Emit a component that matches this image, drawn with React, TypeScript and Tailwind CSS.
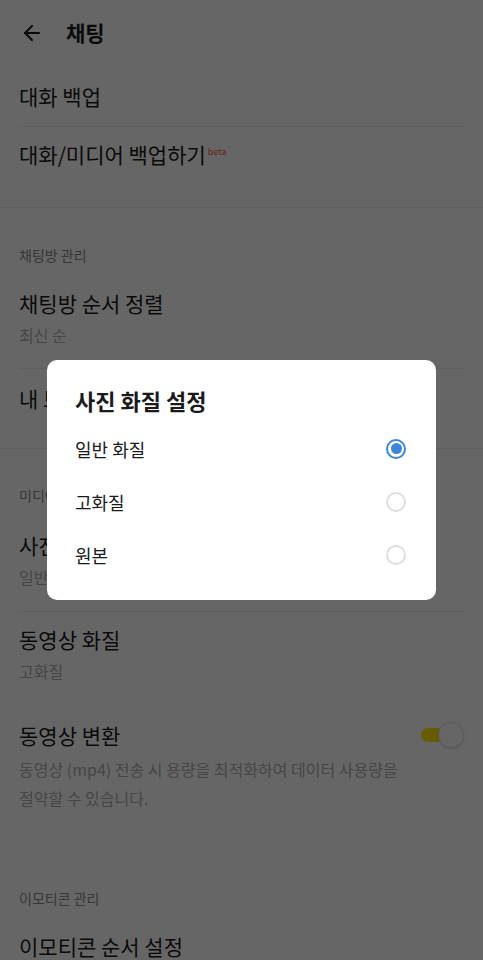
import { ArrowLeft } from 'lucide-react';

const FONT = "font-['Noto_Sans_CJK_KR','Noto_Sans',sans-serif]";

function SectionLabel({ text, top }: { text: string; top: string }) {
  return <div className={`px-[19px] ${top} text-[14px] leading-[20px] text-[#8a8a8a]`}>{text}</div>;
}

function Title({ children }: { children: React.ReactNode }) {
  return <div className="text-[21px] leading-[28px] text-[#1a1a1a]">{children}</div>;
}

function Sub({ text }: { text: string }) {
  return <div className="mt-[7px] text-[16px] leading-[22px] text-[#b0b0b0]">{text}</div>;
}

function Radio({ checked }: { checked?: boolean }) {
  return checked ? (
    <div className="w-[20px] h-[20px] rounded-full border-2 border-[#3a86db] flex items-center justify-center">
      <div className="w-[11px] h-[11px] rounded-full bg-[#3a86db]" />
    </div>
  ) : (
    <div className="w-[20px] h-[20px] rounded-full border-2 border-[#dedede]" />
  );
}

export default function App() {
  const options = [
    { label: '일반 화질', checked: true },
    { label: '고화질' },
    { label: '원본' },
  ];

  return (
    <div className={`relative h-[960px] w-full overflow-hidden bg-white ${FONT}`}>
      {/* Header */}
      <div className="h-[66px] flex items-center px-[20px]">
        <ArrowLeft className="w-[24px] h-[24px] text-[#1a1a1a]" strokeWidth={2} />
        <span className="ml-[22px] text-[21px] font-bold text-[#1a1a1a]">채팅</span>
      </div>

      {/* Backup */}
      <div className="mx-[19px] h-[61px] flex items-center border-b border-[#ececec]">
        <Title>대화 백업</Title>
      </div>
      <div className="px-[19px] pt-[13px] pb-[39px] border-b border-[#ececec]">
        <Title>
          대화/미디어 백업하기
          <span className="ml-[2px] text-[9px] leading-none text-[#ff5a3c] relative top-[-8px]">beta</span>
        </Title>
      </div>

      {/* Chat room management */}
      <SectionLabel text="채팅방 관리" top="pt-[37px]" />
      <div className="mx-[19px] pt-[24px] pb-[22px] border-b border-[#ececec]">
        <Title>채팅방 순서 정렬</Title>
        <Sub text="최신 순" />
      </div>
      <div className="px-[19px] pt-[15px] pb-[36px] border-b border-[#ececec]">
        <Title>내 보관함</Title>
      </div>

      {/* Media management */}
      <SectionLabel text="미디어 관리" top="pt-[36px]" />
      <div className="mx-[19px] pt-[26px] pb-[23px] border-b border-[#ececec]">
        <Title>사진 화질</Title>
        <Sub text="일반 화질" />
      </div>
      <div className="mx-[19px] pt-[13px]">
        <Title>동영상 화질</Title>
        <Sub text="고화질" />
      </div>
      <div className="px-[19px] pt-[39px]">
        <div className="flex items-center justify-between">
          <Title>동영상 변환</Title>
          <div className="relative w-[44px] h-[26px] flex items-center">
            <div className="ml-[1px] w-[34px] h-[14px] rounded-full bg-[#fee500]" />
            <div className="absolute right-0 top-0 w-[26px] h-[26px] rounded-full bg-white border border-[#e2e2e2] shadow-sm" />
          </div>
        </div>
        <div className="mt-[6px] pr-[40px] text-[16px] leading-[29px] text-[#b0b0b0] break-keep">
          동영상 (mp4) 전송 시 용량을 최적화하여 데이터 사용량을 절약할 수 있습니다.
        </div>
      </div>

      {/* Emoticon management */}
      <SectionLabel text="이모티콘 관리" top="pt-[75px]" />
      <div className="px-[19px] pt-[24px]">
        <Title>이모티콘 순서 설정</Title>
      </div>

      {/* Dim overlay + dialog */}
      <div className="absolute inset-0 bg-black/60 flex items-center justify-center">
        <div className="w-[389px] h-[240px] bg-white rounded-[10px] pt-[25px] pl-[28px] pr-[30px]">
          <div className="text-[22px] leading-[30px] font-bold text-[#1a1a1a]">사진 화질 설정</div>
          <div className="mt-[7px]">
            {options.map((o) => (
              <div key={o.label} className="h-[53px] flex items-center justify-between">
                <span className="text-[18px] leading-[26px] text-[#1a1a1a]">{o.label}</span>
                <Radio checked={o.checked} />
              </div>
            ))}
          </div>
        </div>
      </div>
    </div>
  );
}
